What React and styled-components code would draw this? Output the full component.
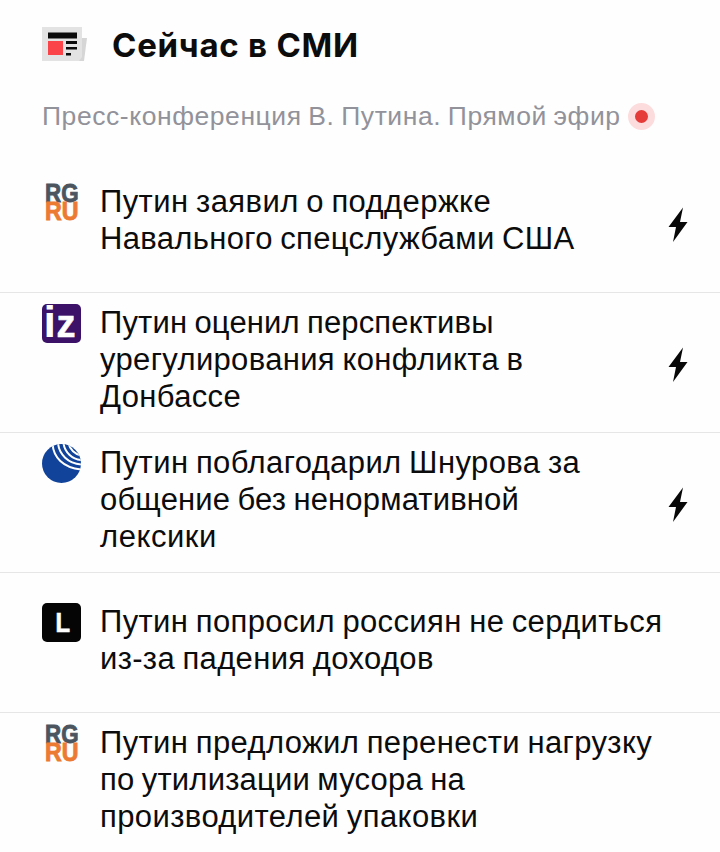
import React from 'react'
import styled, { createGlobalStyle } from 'styled-components'

const GlobalStyle = createGlobalStyle`
    body {
        margin: 0;
        background: #fefefe;
    }
`

// each line is [text, letter spacing]
const news = [
    { source: 'rg', fast: true, lines: [['Путин заявил о поддержке', 0.42], ['Навального спецслужбами США', 0.33]] },
    { source: 'iz', fast: true, lines: [['Путин оценил перспективы', 0.15], ['урегулирования конфликта в', 0.34], ['Донбассе', 0.35]] },
    { source: 'globe', fast: true, lines: [['Путин поблагодарил Шнурова за', 0.4], ['общение без ненормативной', 0.16], ['лексики', 0.55]] },
    { source: 'lenta', fast: false, lines: [['Путин попросил россиян не сердиться', 0.37], ['из-за падения доходов', 0.34]] },
    { source: 'rg', fast: false, lines: [['Путин предложил перенести нагрузку', 0.37], ['по утилизации мусора на', 0.2], ['производителей упаковки', 0.41]] },
]

const NewsIcon = () => (
    <svg width="46" height="36" viewBox="0 0 46 36">
        <path d="M38 11h7l-3 23h-6z" fill="#d6d6d6" />
        <path d="M0 0h40v30l-3 4H0z" fill="#e3e3e3" />
        <path d="M6 5.5h29v6H6z" fill="#0b0b0b" />
        <path d="M6 14h15v14H6z" fill="#fb4449" />
        <path d="M24 14h11v3H24zM24 20h11v2.5H24zM24 26h5v2.5h-5z" fill="#0b0b0b" />
    </svg>
)

const RgIcon = () => (
    <LogoSvg>
        <text x="3" y="18.5" fontSize="25.5" textLength="33.5" lengthAdjust="spacingAndGlyphs" fill="#4b5560" stroke="#4b5560" strokeWidth=".9">RG</text>
        <text x="3" y="37" fontSize="25.5" textLength="33.5" lengthAdjust="spacingAndGlyphs" fill="#ec7a32" stroke="#ec7a32" strokeWidth=".9">RU</text>
    </LogoSvg>
)

const IzIcon = () => (
    <LogoSvg>
        <rect width="39" height="39" rx="5" fill="#3b1268" />
        <text x="1.5" y="33" fontSize="45" fill="#fefefe">i</text>
        <text x="14.5" y="33" fontSize="38" fill="#fefefe" stroke="#fefefe" strokeWidth=".6">z</text>
    </LogoSvg>
)

const GlobeIcon = () => (
    <LogoSvg>
        <defs>
            <clipPath id="globe"><circle cx="19.5" cy="19.5" r="19.5" /></clipPath>
        </defs>
        <g clipPath="url(#globe)">
            <rect width="39" height="39" fill="#11439a" />
            <g fill="none" stroke="#fefefe" strokeWidth="2">
                <path d="M10.500-1C11 13 21 24 40 25.500" />
                <path d="M16-1C17 10 26 20 40 20.500" />
                <path d="M21.500-1C22.500 8 30 15.500 40 16" />
                <path d="M26.500-1C27.500 5 33 11 40 11.500" />
                <path d="M31-1C32 3 35 6.500 40 7" />
            </g>
        </g>
    </LogoSvg>
)

const LentaIcon = () => (
    <LogoSvg>
        <rect width="39" height="39" rx="5" fill="#050505" />
        <text x="13.5" y="28.5" fontSize="28" textLength="14.5" lengthAdjust="spacingAndGlyphs" fill="#fefefe" stroke="#fefefe" strokeWidth=".7">L</text>
    </LogoSvg>
)

const Bolt = () => (
    <svg width="20" height="36" viewBox="0 0 20 36">
        <path d="M15 .5L.5 20H8L5 35 19.5 15H12z" fill="#080808" />
    </svg>
)

const icons = { rg: RgIcon, iz: IzIcon, globe: GlobeIcon, lenta: LentaIcon }

const App = () => {
  return (
    <Page>
        <GlobalStyle />
        <Header>
            <NewsIcon />
            <Title>Сейчас в СМИ</Title>
        </Header>
        <Live>
            <LiveText>Пресс-конференция В. Путина. Прямой эфир</LiveText>
            <LiveDot />
        </Live>
        <List>
            {news.map((item, i) => {
                const Icon = icons[item.source]
                return (
                    <Row key={i}>
                        <Story>
                            <Icon />
                            <Headline>
                                {item.lines.map(([text, spacing]) => (
                                    <Line key={text} $spacing={spacing}>{text}</Line>
                                ))}
                            </Headline>
                        </Story>
                        {item.fast && <Bolt />}
                    </Row>
                )
            })}
        </List>
    </Page>
  )
}

const Page = styled.main`
    width: 720px;
    height: 852px;
    overflow: hidden;
    background: #fefefe;
    color: #0c0c0c;
    font-family: "Liberation Sans", Arial, sans-serif;
    svg {
        flex: none;
        display: block;
    }
`
const Header = styled.header`
    display: flex;
    align-items: center;
    gap: 24px;
    height: 36px;
    padding: 27px 42px 0;
`
const Title = styled.h1`
    margin: 0;
    font-family: Inter, sans-serif;
    font-size: 33px;
    line-height: 36px;
    font-weight: 700;
    letter-spacing: 0.75px;
    white-space: nowrap;
`
const Live = styled.div`
    display: flex;
    align-items: center;
    gap: 7px;
    height: 30px;
    padding: 38px 42px 22px;
`
const LiveText = styled.span`
    color: #92929a;
    font-size: 26.5px;
    line-height: 30px;
    letter-spacing: 0.56px;
    word-spacing: -1.2px;
    white-space: nowrap;
`
const LiveDot = styled.span`
    box-sizing: border-box;
    width: 27px;
    height: 27px;
    border: 7px solid #fddcdd;
    border-radius: 50%;
    background: #e53b39;
`
const List = styled.div`
    display: flex;
    flex-direction: column;
`
const Row = styled.article`
    display: flex;
    align-items: center;
    justify-content: space-between;
    box-sizing: border-box;
    height: 140px;
    padding: 4px 32px 0 42px;
    border-bottom: 1px solid #e6e6e6;
    &:last-child {
        border-bottom-color: transparent;
    }
`
const Story = styled.div`
    display: flex;
    align-items: flex-start;
    gap: 19px;
    margin-top: -9px;
`
const Headline = styled.h2`
    margin: 1px 0 0;
    font-size: 31px;
    line-height: 36.7px;
    font-weight: 400;
`
const Line = styled.span`
    display: block;
    white-space: nowrap;
    letter-spacing: ${({ $spacing }) => $spacing}px;
    word-spacing: -1.5px;
`
const LogoSvg = styled.svg.attrs({ viewBox: '0 0 39 39' })`
    width: 39px;
    height: 39px;
    overflow: visible;
    font-weight: 700;
`

export default App
